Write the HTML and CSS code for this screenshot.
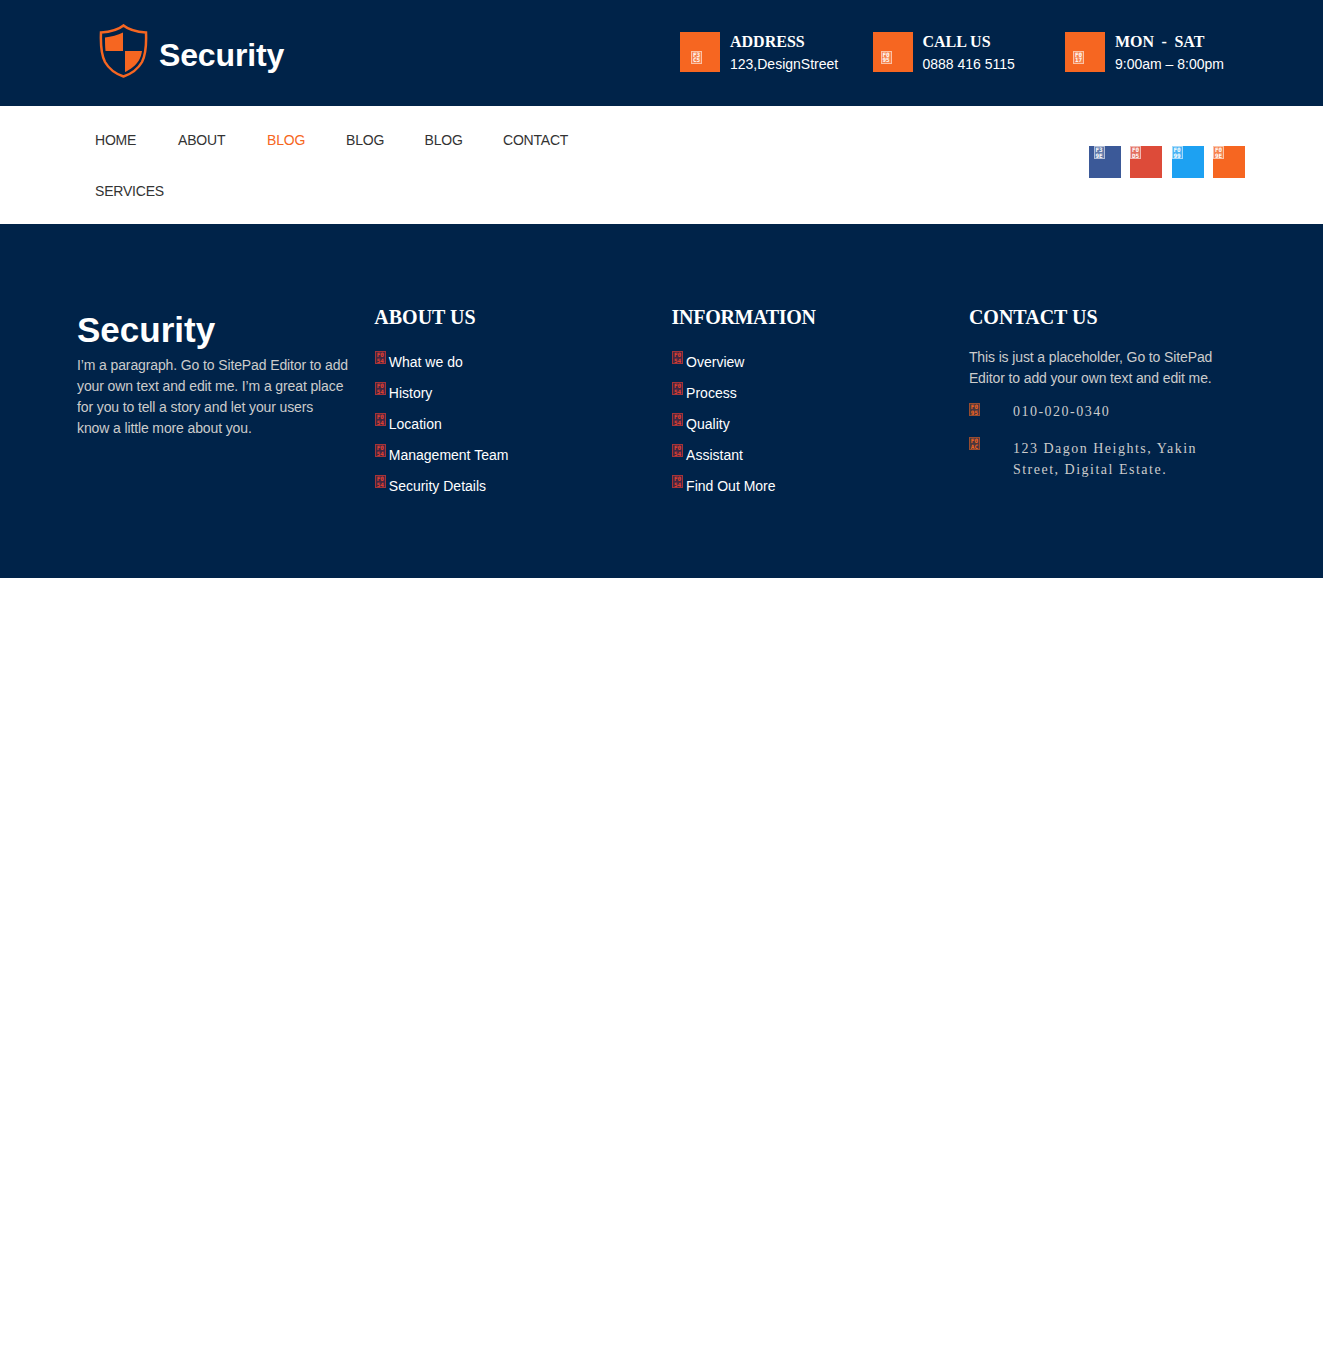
FILE: index.html
```html
<!DOCTYPE html>
<html>
<head>
<meta charset="utf-8">
<title>Security</title>
<link rel="stylesheet" href="styles.css">
</head>
<body>
<header class="topbar">
	<a class="logo" href="#">
		<svg class="logo-shield" width="50" height="54" viewBox="0 0 50 54">
			<path d="M24.500 1.500C19 6 10 8 2 8.500C1.500 20 2 30 6 38C10 45 17 50 24.500 52.500C32 50 39 45 43 38C47 30 47.500 20 47 8.500C39 8 30 6 24.500 1.500Z" fill="#002349" stroke="#f66621" stroke-width="2.500"/>
			<path d="M24 8.500C19 11 12 13 6 13.500C6 17 6 22 6.500 27L24 27Z" fill="#f66621"/>
			<path d="M26 27L43 27C42 34 39 39 34 43C31 45.500 28 47 26 48Z" fill="#f66621"/>
		</svg>
		<span class="logo-text">Security</span>
	</a>
	<div class="info-list">
		<div class="info">
			<div class="info-icon first"><span class="tofu">F3<br>C5</span></div>
			<div><h4>ADDRESS</h4><p>123,DesignStreet</p></div>
		</div>
		<div class="info">
			<div class="info-icon"><span class="tofu">F0<br>95</span></div>
			<div><h4>CALL US</h4><p>0888 416 5115</p></div>
		</div>
		<div class="info">
			<div class="info-icon"><span class="tofu">F0<br>17</span></div>
			<div><h4 class="wide">MON - SAT</h4><p>9:00am – 8:00pm</p></div>
		</div>
	</div>
</header>

<nav class="navbar">
	<ul class="menu">
		<li class="m-home"><a href="#">HOME</a></li>
		<li class="m-about"><a href="#">ABOUT</a></li>
		<li class="m-blog"><a class="active" href="#">BLOG</a></li>
		<li class="m-blog2"><a href="#">BLOG</a></li>
		<li class="m-blog2"><a href="#">BLOG</a></li>
		<li class="m-contact"><a href="#">CONTACT</a></li>
		<li><a href="#">SERVICES</a></li>
	</ul>
	<div class="social">
		<a class="fb" href="#"><span class="tofu">F3<br>9E</span></a>
		<a class="gp" href="#"><span class="tofu">F0<br>D5</span></a>
		<a class="tw" href="#"><span class="tofu">F0<br>99</span></a>
		<a class="rs" href="#"><span class="tofu">F0<br>9E</span></a>
	</div>
</nav>

<footer class="footer">
	<div class="col">
		<div class="foot-logo">Security</div>
		<p class="para">I’m a paragraph. Go to SitePad Editor to add your own text and edit me. I’m a great place for you to tell a story and let your users know a little more about you.</p>
	</div>
	<div class="col">
		<h3>ABOUT US</h3>
		<ul class="links">
			<li><span class="tofu red">F0<br>54</span><a href="#">What we do</a></li>
			<li><span class="tofu red">F0<br>54</span><a href="#">History</a></li>
			<li><span class="tofu red">F0<br>54</span><a href="#">Location</a></li>
			<li><span class="tofu red">F0<br>54</span><a href="#">Management Team</a></li>
			<li><span class="tofu red">F0<br>54</span><a href="#">Security Details</a></li>
		</ul>
	</div>
	<div class="col">
		<h3 class="tight">INFORMATION</h3>
		<ul class="links">
			<li><span class="tofu red">F0<br>54</span><a href="#">Overview</a></li>
			<li><span class="tofu red">F0<br>54</span><a href="#">Process</a></li>
			<li><span class="tofu red">F0<br>54</span><a href="#">Quality</a></li>
			<li><span class="tofu red">F0<br>54</span><a href="#">Assistant</a></li>
			<li><span class="tofu red">F0<br>54</span><a href="#">Find Out More</a></li>
		</ul>
	</div>
	<div class="col">
		<h3>CONTACT US</h3>
		<p class="para contact-intro">This is just a placeholder, Go to SitePad Editor to add your own text and edit me.</p>
		<div class="contact-row">
			<span class="tofu orange">F0<br>95</span>
			<p>010-020-0340</p>
		</div>
		<div class="contact-row second">
			<span class="tofu orange">F0<br>AC</span>
			<p>123 Dagon Heights, Yakin Street, Digital Estate.</p>
		</div>
	</div>
</footer>
</body>
</html>
```

FILE: styles.css
```css
* {
	box-sizing: border-box;
}
html, body {
	margin: 0;
	padding: 0;
	background: #fff;
}
body {
	font-family: "Liberation Sans", Arial, sans-serif;
	font-size: 14px;
}
a {
	color: inherit;
	text-decoration: none;
}
ul {
	list-style: none;
	margin: 0;
	padding: 0;
}
p, h3, h4 {
	margin: 0;
}

/* missing icon font boxes */
.tofu {
	display: inline-block;
	width: 11px;
	height: 13px;
	border: 1px solid rgba(255, 255, 255, .5);
	background: rgba(255, 255, 255, .2);
	font-family: "DejaVu Sans Mono", monospace;
	font-size: 6px;
	font-weight: bold;
	letter-spacing: 0;
	line-height: 5.500px;
	text-align: center;
	color: #fff;
	flex: none;
}
.tofu.red {
	color: #e8402f;
	border-color: rgba(230, 60, 50, .6);
	background: rgba(220, 50, 50, .3);
}
.tofu.orange {
	color: #f66621;
	border-color: rgba(246, 102, 33, .45);
	background: rgba(246, 102, 33, .3);
}

/* top */
.topbar {
	height: 106px;
	background: #002349;
	display: flex;
	justify-content: space-between;
	padding: 24px 78px 0 99px;
}
.logo {
	display: flex;
	align-items: flex-start;
	gap: 10px;
	color: #fff;
}
.logo-text {
	font-size: 32px;
	font-weight: bold;
	letter-spacing: -.15px;
	line-height: 37px;
	margin-top: 13px;
}
.info-list {
	display: flex;
	padding-top: 8px;
}
.info {
	display: flex;
	gap: 10px;
	width: 192.500px;
	color: #fff;
}
.info:last-child {
	width: 180px;
}
.info-icon {
	width: 40px;
	height: 40px;
	background: #f66621;
	padding: 17px 0 0 8px;
}
.info-icon.first {
	padding-left: 11px;
}
.info h4 {
	font-family: "Liberation Serif", serif;
	font-size: 16px;
	line-height: 20px;
}
.info h4.wide {
	word-spacing: 3.500px;
}
.info p {
	font-size: 14px;
	line-height: 24px;
}

/* nav */
.navbar {
	height: 118px;
	display: flex;
	justify-content: space-between;
	padding: 0 78px 0 95px;
}
.menu {
	display: flex;
	flex-wrap: wrap;
	width: 560px;
	align-content: flex-start;
	padding-top: 9px;
	color: #333;
	letter-spacing: -.2px;
}
.menu li {
	line-height: 51px;
	height: 51px;
}
.m-home { width: 83px; }
.m-about { width: 89px; }
.m-blog { width: 79px; }
.m-blog2 { width: 78.500px; }
.m-contact { width: 150px; }
.menu .active {
	color: #f66621;
}
.social {
	display: flex;
	gap: 9.500px;
	padding-top: 40px;
}
.social a {
	display: block;
	width: 32px;
	height: 32px;
	line-height: 0;
}
.fb { background: #3b5998; padding-left: 5px; }
.gp { background: #dd4b39; }
.tw { background: #1da1f2; }
.rs { background: #f66621; }

/* footer */
.footer {
	height: 354px;
	background: #002349;
	display: grid;
	grid-template-columns: repeat(4, 297.300px);
	padding: 0 0 0 77px;
	color: #fff;
}
.col {
	width: 275px;
	padding-top: 81px;
}
.foot-logo {
	font-size: 35px;
	font-weight: bold;
	line-height: 40px;
	margin-top: 5px;
}
.para {
	color: #ccc;
	font-size: 14px;
	letter-spacing: -.12px;
	line-height: 21px;
	margin-top: 5px;
	max-width: 271.500px;
}
.col h3 {
	font-family: "Liberation Serif", serif;
	font-size: 20px;
	line-height: 24px;
}
.col h3.tight {
	letter-spacing: -.3px;
}
.links {
	margin-top: 22px;
}
.links li {
	display: flex;
	height: 31px;
	gap: 3px;
	line-height: 20px;
}
.links .tofu {
	margin-left: .500px;
}
.links a {
	padding-top: 1px;
}
.contact-intro {
	margin-top: 18px;
}
.contact-row {
	display: flex;
	gap: 33px;
	margin-top: 12px;
	font-family: "Liberation Serif", serif;
	letter-spacing: 1.500px;
	color: #ccc;
	line-height: 21px;
}
.contact-row .tofu {
	margin-top: 2px;
}
.contact-row.second {
	margin-top: 15px;
}
.contact-row.second .tofu {
	margin-top: 0;
}
.contact-row.second p {
	padding-top: 1px;
}
```
